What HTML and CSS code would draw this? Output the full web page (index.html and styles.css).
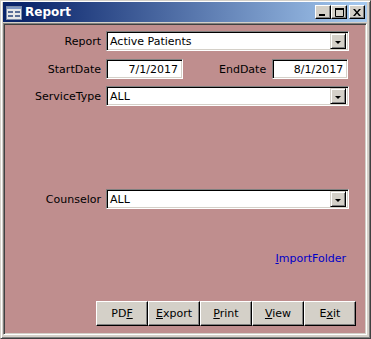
FILE: index.html
```html
<!DOCTYPE html>
<html lang="en">
<head>
    <meta charset="UTF-8">
    <title>Report</title>
    <link rel="stylesheet" href="styles.css">
</head>
<body>
    <div class="window">
        <div class="titlebar">
            <svg class="app-icon" width="16" height="14" viewBox="0 0 16 14">
                <rect x="0.5" y="0.5" width="15" height="13" fill="#e8e8e8" stroke="#7a8aa8"/>
                <rect x="1" y="1" width="14" height="2" fill="#7f97c4"/>
                <rect x="2" y="5" width="5" height="2" fill="#5a6e96"/>
                <rect x="9" y="5" width="5" height="2" fill="#5a6e96"/>
                <rect x="2" y="9" width="5" height="2" fill="#5a6e96"/>
                <rect x="9" y="9" width="5" height="2" fill="#5a6e96"/>
            </svg>
            <span class="title">Report</span>
            <div class="controls">
                <button class="ctl">
                    <svg width="8" height="7" viewBox="0 0 8 7"><rect x="0" y="5" width="6" height="2" fill="#000"/></svg>
                </button>
                <button class="ctl">
                    <svg width="9" height="9" viewBox="0 0 9 9"><path d="M0.5 1.5h8v7h-8z" fill="none" stroke="#000"/><rect x="0" y="0" width="9" height="2" fill="#000"/></svg>
                </button>
                <button class="ctl close">
                    <svg width="8" height="7" viewBox="0 0 8 7"><path d="M0 0h2l2 2.5 2-2.5h2l-3 3.5 3 3.5h-2l-2-2.5-2 2.5h-2l3-3.5z" fill="#000"/></svg>
                </button>
            </div>
        </div>

        <div class="client">
            <div class="row first">
                <label class="lbl">Report</label>
                <div class="combo">
                    <span class="value">Active Patients</span>
                    <span class="drop"><i></i></span>
                </div>
            </div>

            <div class="row dates">
                <label class="lbl">StartDate</label>
                <div class="textbox">7/1/2017</div>
                <label class="lbl end">EndDate</label>
                <div class="textbox">8/1/2017</div>
            </div>

            <div class="row service">
                <label class="lbl">ServiceType</label>
                <div class="combo">
                    <span class="value">ALL</span>
                    <span class="drop"><i></i></span>
                </div>
            </div>

            <div class="row counselor">
                <label class="lbl">Counselor</label>
                <div class="combo">
                    <span class="value">ALL</span>
                    <span class="drop"><i></i></span>
                </div>
            </div>

            <div class="link-row">
                <a class="link"><u>I</u>mportFolder</a>
            </div>

            <div class="actions">
                <button class="btn">PD<u>F</u></button>
                <button class="btn"><u>E</u>xport</button>
                <button class="btn"><u>P</u>rint</button>
                <button class="btn"><u>V</u>iew</button>
                <button class="btn">E<u>x</u>it</button>
            </div>
        </div>
    </div>
</body>
</html>
```

FILE: styles.css
```css
:root {
    --face: #d4d0c8;
    --shadow: #808080;
    --dark: #404040;
    --form-bg: #bf8e8e;
}

body {
    margin: 0;
    font-family: "DejaVu Sans", Verdana, sans-serif;
    font-size: 11px;
    color: #000;
}

.window {
    width: 371px;
    height: 339px;
    box-sizing: border-box;
    background: var(--face);
    border: 1px solid;
    border-color: var(--face) var(--dark) var(--dark) var(--face);
    box-shadow: inset 1px 1px #fff, inset -1px -1px var(--shadow);
    padding: 1px 3px 3px 2px;
    display: flex;
    flex-direction: column;
}

.titlebar {
    height: 20px;
    flex: none;
    display: flex;
    align-items: center;
    padding: 0 2px 0 3px;
    background: linear-gradient(to right, #0a246a 5%, #a6caf0);
}

.app-icon {
    flex: none;
    margin-top: 1px;
}

.title {
    margin-left: 3px;
    color: #fff;
    font-weight: bold;
    font-size: 12px;
}

.controls {
    margin-left: auto;
    display: flex;
}

.ctl {
    width: 16px;
    height: 14px;
    box-sizing: border-box;
    padding: 0;
    background: var(--face);
    border: 1px solid;
    border-color: #fff #000 #000 #fff;
    box-shadow: inset -1px -1px var(--shadow);
    display: flex;
    align-items: center;
    justify-content: center;
}

.ctl.close {
    margin-left: 2px;
}

.client {
    flex: 1;
    margin-top: 1px;
    background: var(--form-bg);
    border: 1px solid;
    border-color: var(--shadow) #fff #fff var(--shadow);
    box-shadow: inset 1px 1px var(--dark), inset -1px -1px var(--face);
    padding: 0 2px;
    display: flex;
    flex-direction: column;
}

.row {
    display: flex;
    align-items: center;
}

.row.first { margin-top: 7px; }
.row.dates { margin-top: 8px; }
.row.service { margin-top: 7px; }
.row.counselor { margin-top: 83px; }

.lbl {
    width: 95px;
    flex: none;
    text-align: right;
    margin-right: 5px;
}

.lbl.end {
    width: auto;
    margin-left: 36px;
    margin-right: 6px;
}

.combo,
.textbox {
    box-sizing: border-box;
    background: #fff;
    border: 1px solid;
    border-color: var(--shadow) #fff #fff var(--shadow);
    box-shadow: inset 1px 1px #000, inset -1px -1px var(--face);
}

.combo {
    width: 243px;
    height: 20px;
    display: flex;
    align-items: center;
    padding: 2px;
}

.combo .value {
    flex: 1;
    padding-left: 1px;
}

.drop {
    width: 16px;
    height: 16px;
    box-sizing: border-box;
    background: var(--face);
    border: 1px solid;
    border-color: var(--face) #000 #000 var(--face);
    box-shadow: inset 1px 1px #fff, inset -1px -1px var(--shadow);
    display: flex;
    align-items: center;
    justify-content: center;
}

.drop i {
    width: 0;
    height: 0;
    margin-top: 2px;
    border-left: 3px solid transparent;
    border-right: 3px solid transparent;
    border-top: 3px solid #000;
}

.textbox {
    width: 77px;
    height: 20px;
    text-align: right;
    padding: 2px 4px 0 2px;
    line-height: 15px;
}

.dates .textbox:last-child {
    width: 76px;
}

.link-row {
    margin-top: 43px;
    display: flex;
    justify-content: flex-end;
    padding-right: 18px;
}

.link {
    color: #0000c8;
}

.actions {
    margin-top: 36px;
    margin-left: 90px;
    display: flex;
}

.btn {
    width: 52px;
    height: 25px;
    box-sizing: border-box;
    padding: 0;
    font-family: inherit;
    font-size: 11px;
    color: #000;
    background: var(--face);
    border: 1px solid;
    border-color: #fff #000 #000 #fff;
    box-shadow: inset -1px -1px var(--shadow);
}
```
